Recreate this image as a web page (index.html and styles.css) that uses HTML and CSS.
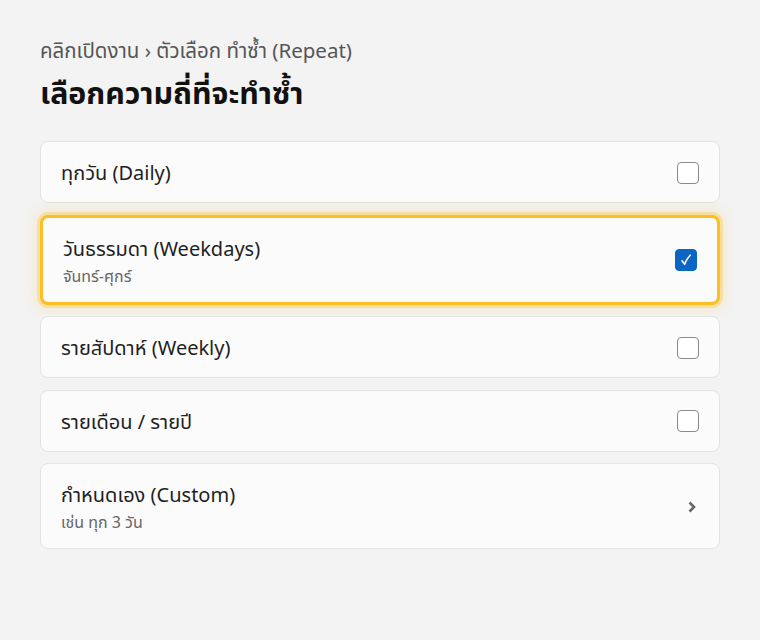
FILE: index.html
```html
<!DOCTYPE html>
<html lang="th">
<head>
<meta charset="utf-8">
<title>Repeat</title>
<link rel="stylesheet" href="styles.css">
</head>
<body>
<main class="page">
  <div class="crumb">คลิกเปิดงาน › ตัวเลือก ทำซ้ำ (Repeat)</div>
  <h1 class="title">เลือกความถี่ที่จะทำซ้ำ</h1>
  <ul class="list">
    <li class="card">
      <div class="text"><div class="label">ทุกวัน (Daily)</div></div>
      <span class="box"></span>
    </li>
    <li class="card selected">
      <div class="text"><div class="label">วันธรรมดา (Weekdays)</div><div class="sub">จันทร์-ศุกร์</div></div>
      <span class="box checked"><svg viewBox="0 0 22 22" width="22" height="22"><path d="M7 11.8 L9.6 15.2 C11 11.5 12.8 8.6 15.2 6.2" fill="none" stroke="#fff" stroke-width="1.6" stroke-linecap="round" stroke-linejoin="round"/></svg></span>
    </li>
    <li class="card">
      <div class="text"><div class="label">รายสัปดาห์ (Weekly)</div></div>
      <span class="box"></span>
    </li>
    <li class="card">
      <div class="text"><div class="label">รายเดือน / รายปี</div></div>
      <span class="box"></span>
    </li>
    <li class="card">
      <div class="text"><div class="label">กำหนดเอง (Custom)</div><div class="sub">เช่น ทุก 3 วัน</div></div>
      <svg class="chev" viewBox="0 0 10 12" width="10" height="12"><path d="M2.5 1.5 L7 6 L2.5 10.5" fill="none" stroke="#666" stroke-width="2.6" stroke-linejoin="miter"/></svg>
    </li>
  </ul>
</main>
</body>
</html>
```

FILE: styles.css
```css
html, body {
  margin: 0;
  padding: 0;
  background: #f3f3f3;
}
body {
  font-family: "Noto Sans", "Noto Sans Thai", sans-serif;
  color: #1a1a1a;
}
.page {
  padding: 36px 40px 40px;
}
.crumb {
  font-size: 20.5px;
  line-height: 28px;
  color: #555;
}
.title {
  margin: 9px 0 0;
  font-size: 30.3px;
  line-height: 40px;
  font-weight: 700;
  color: #111;
}
.list {
  list-style: none;
  margin: 28px 0 0;
  padding: 0;
  display: flex;
  flex-direction: column;
  gap: 11.5px;
}
.card {
  display: flex;
  align-items: center;
  justify-content: space-between;
  background: #fbfbfb;
  border: 1px solid #e3e3e3;
  border-radius: 8px;
  padding: 17px 20px 16px;
  min-height: 27px;
}
.card.selected {
  border: 3px solid #fbbf24;
  padding: 17px 20px 16px;
  box-shadow: 0 0 0 3px rgba(251, 191, 36, 0.3), 0 0 14px 5px rgba(251, 191, 36, 0.18);
}
.label {
  font-size: 20px;
  line-height: 27px;
  color: #1f1f1f;
}
.sub {
  font-size: 16px;
  line-height: 20px;
  color: #666;
  margin-top: 4px;
}
.box {
  width: 22px;
  height: 22px;
  box-sizing: border-box;
  border: 1.5px solid #8a8a8a;
  border-radius: 4px;
  background: #fff;
  flex: none;
}
.box.checked {
  background: #0a66c2;
  border-color: #0a66c2;
  display: flex;
  align-items: center;
  justify-content: center;
}
.box.checked svg {
  margin: -1.5px;
}
.chev {
  flex: none;
  margin-right: 2px;
}
```
